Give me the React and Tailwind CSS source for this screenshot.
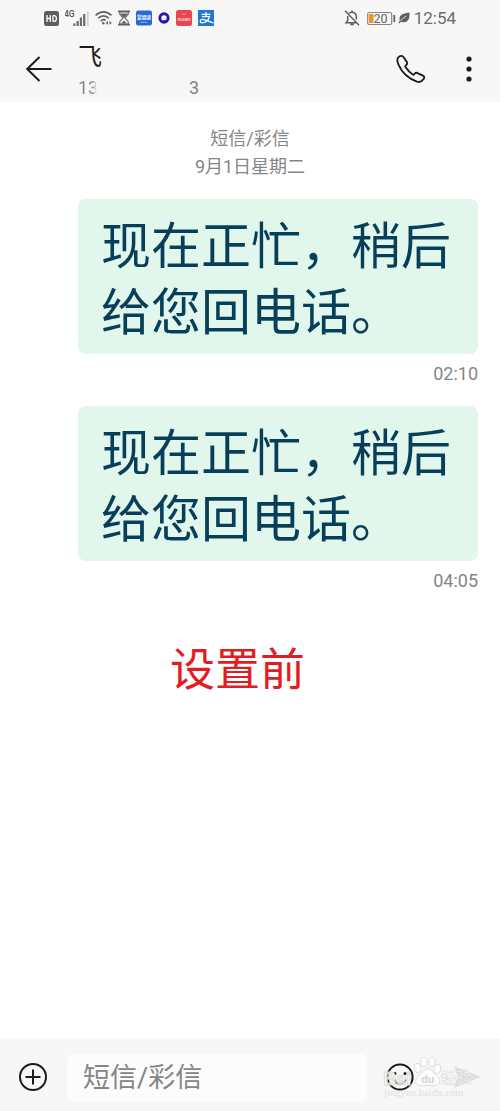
import React from 'react';

const messages = [
    { id: 1, text: '现在正忙，稍后给您回电话。', time: '02:10' },
    { id: 2, text: '现在正忙，稍后给您回电话。', time: '04:05' },
];

const StatusBar = () => {
    return (
        <div className="flex h-9 items-center justify-between px-11 text-[#6b6b6b]">
            <div className="flex items-center gap-[6px]">
                <svg width="15" height="15" viewBox="0 0 15 15" aria-hidden="true">
                    <rect width="15" height="15" rx="2.5" fill="#5d5d5d" />
                    <path d="M3 4v7M6.3 4v7M3 7.5h3.3M9 4.6v5.8M9 4.6h1.2q2.2 0 2.2 2.9t-2.2 2.9H9" fill="none" stroke="#fff" strokeWidth="1.3" />
                </svg>
                <svg width="24" height="17" viewBox="0 0 24 17" aria-hidden="true">
                    <text x="-1" y="7" fontSize="8.5" fontWeight="500" fontFamily="Roboto, sans-serif" fill="#555">4G</text>
                    <path d="M9.3 16v-2.500M12.600 16v-5M15.900 16V7.500M19.200 16V4" stroke="#6b6b6b" strokeWidth="2.2" />
                    <path d="M22.800 16V1.500" stroke="#d2d2d2" strokeWidth="1.800" />
                </svg>
                <svg width="17" height="16" viewBox="0 0 18 16" fill="none" stroke="#5f5f5f" strokeWidth="1.800" aria-hidden="true">
                    <path d="M.6 5.200Q9-2.200 17.400 5.200M3.300 8.200Q9 3.200 14.700 8.200M6 11.200q3-2.600 5.300-.6" />
                    <circle cx="8.800" cy="13.500" r="1.300" fill="#5f5f5f" stroke="none" />
                    <path d="M13.800 11.200v4l-2.400-2zM15.400 11.200l2.400 2-2.400 2z" fill="#5f5f5f" stroke="none" />
                </svg>
                <svg width="12" height="16" viewBox="3 0 12 16" aria-hidden="true">
                    <path d="M3 .5h12v1.800H3zM3 13.700h12v1.800H3z" fill="#5f5f5f" />
                    <path d="M4.800 2v2.300L8 8l-3.200 3.700V14h8.400v-2.300L10 8l3.200-3.700V2z" fill="#fff" stroke="#5f5f5f" strokeWidth="1.100" />
                    <path d="M5 3.500h8L9 8.300zM6 13.500L9 10.500l3 3z" fill="#5f5f5f" />
                </svg>
                <svg width="16" height="16" viewBox="0 0 17 16" aria-hidden="true">
                    <rect width="17" height="16" rx="2.500" fill="#2767d8" />
                    <text x="8.500" y="9" fontSize="5" fontWeight="bold" textAnchor="middle" fontFamily="Noto Sans CJK SC, sans-serif" fill="#fff">掌阅读</text>
                    <path d="M5 12.500h7" stroke="#a9c6ff" strokeWidth="1.200" strokeDasharray="1.500 .5" />
                </svg>
                <svg width="12" height="12" viewBox="0 0 13 13" aria-hidden="true">
                    <circle cx="6.500" cy="6.500" r="4.500" fill="#fff" stroke="#2419a8" strokeWidth="3.200" />
                    <path d="M6.500 8.800l2 2.500" stroke="#2419a8" strokeWidth="2" />
                </svg>
                <svg width="16" height="16" viewBox="0 0 16 16" aria-hidden="true">
                    <rect width="16" height="16" rx="2.500" fill="#ea4650" />
                    <path d="M5.500 3q2.500 3.500 5 0" fill="none" stroke="#ffa5a8" strokeWidth=".8" />
                    <text x="8" y="11" fontSize="3.500" fontWeight="bold" textAnchor="middle" fontFamily="Roboto, sans-serif" fill="#ffd7d8">HUAWEI</text>
                </svg>
                <svg width="16" height="16" viewBox="0 0 16 16" aria-hidden="true">
                    <rect width="16" height="16" fill="#1c77e0" />
                    <path d="M3.500 4.300h9M8 2v4.500M4 6.700h7.500Q10 12.500 4.200 12.800c-2.800 0-2.500-3.600.6-3.400 3.200.2 5.200 2 10.700 3.600" fill="none" stroke="#fff" strokeWidth="1.300" />
                </svg>
            </div>
            <div className="flex items-center gap-1">
                <svg className="mr-[3px]" width="16" height="16" viewBox="0 0 16 16" fill="none" stroke="#5f5f5f" strokeWidth="1.500" aria-hidden="true">
                    <path d="M5 3.200Q6 2.300 8 2.300q4 0 4.300 4.200v3M3.700 6v4.500L2 12.800h10.500M8 .6v1.700M1 .8l14 14.400" />
                    <path d="M6.200 14.300h3.600" strokeWidth="2" />
                </svg>
                <svg width="29" height="15" viewBox="0 0 29 15" aria-hidden="true">
                    <rect x=".7" y="1.500" width="24" height="12" rx="1.500" fill="none" stroke="#858585" strokeWidth="1.200" />
                    <path d="M2 3h4.500v9H2z" fill="#f7931d" />
                    <text x="6.500" y="12" fontSize="12.500" fontFamily="Roboto, sans-serif" fill="#666">20</text>
                    <path d="M27.300 4v7" stroke="#666" strokeWidth="1.800" />
                </svg>
                <svg className="-ml-[2px]" width="12" height="12" viewBox="0 0 12 12" aria-hidden="true">
                    <path d="M11.500.5Q12 10 6 10.200q-1.800.2-3-.5L1.200 11.500l-.7-.8 1.300-1.900Q-.5 1.500 11.500.5z" fill="#5f5f5f" />
                    <path d="M2.500 9Q4 6 8.500 4" fill="none" stroke="#f7f7f7" strokeWidth=".8" />
                </svg>
                <span className="text-[17px] leading-6">12:54</span>
            </div>
        </div>
    );
};

const ChatHeader = () => {
    return (
        <div className="flex h-[66px] items-center pr-4 pl-6">
            <button type="button" aria-label="返回" className="flex w-[54px] items-center">
                <svg width="29" height="28" viewBox="0 0 29 28" fill="none" stroke="#1c1c1c" strokeWidth="2" aria-hidden="true">
                    <path d="M27.500 14H3.200M15.500 2L3.200 14l12.300 12" />
                </svg>
            </button>
            <div className="flex-1 self-end">
                <h1 className="text-2xl leading-[34px] text-[#1c1c1c]">飞</h1>
                <p className="flex w-[121px] justify-between text-[18px] leading-7 text-[#858585]">
                    <span className="bg-linear-to-r from-[#858585] from-70% to-[#f7f7f7] to-95% bg-clip-text text-transparent">13</span>
                    <span>3</span>
                </p>
            </div>
            <button type="button" aria-label="拨打电话" className="mr-7">
                <svg width="30" height="30" viewBox="79 58 90 90" fill="none" stroke="#1c1c1c" strokeWidth="5.500" strokeLinejoin="round" aria-hidden="true">
                    <path d="M88 66Q97 60 103 69L112 83Q114 87 110 91Q105 94 108 98Q117 112 130 120Q133 121 135 117Q140 112 145 116L160 123Q167 127 161 134Q154 145 142 141Q102 126 86 89Q79 72 88 66z" />
                </svg>
            </button>
            <button type="button" aria-label="更多" className="flex w-[30px] justify-center">
                <svg width="8" height="28" viewBox="0 0 8 28" fill="#1c1c1c" aria-hidden="true">
                    <circle cx="4" cy="4" r="2.600" />
                    <circle cx="4" cy="14" r="2.600" />
                    <circle cx="4" cy="24" r="2.600" />
                </svg>
            </button>
        </div>
    );
};

const Message = ({ text, time }) => {
    return (
        <li className="flex flex-col">
            <p className="rounded-lg bg-[#e1f7eb] pt-[15px] pr-5 pb-2 pl-[23px] text-[50px] leading-[66px] text-[#073f5b]">
                {text}
            </p>
            <time className="self-end pt-1 text-[18px] leading-8 text-[#858585]">{time}</time>
        </li>
    );
};

const Watermark = () => {
    return (
        <svg className="pointer-events-none absolute right-[19px] bottom-[11px]" width="100" height="45" viewBox="393 75 300 135" aria-hidden="true">
            <g fill="#fcfcfc" stroke="#d8d8d8" strokeWidth="2.500">
                <g fontWeight="bold" fillOpacity=".75">
                    <text x="400" y="164" fontSize="54" fontFamily="Liberation Sans, sans-serif">Bai</text>
                    <text x="572" y="160" fontSize="46" fontFamily="Noto Sans CJK SC, sans-serif" strokeWidth="1.500">经验</text>
                </g>
                <ellipse cx="503" cy="114" rx="10" ry="14" transform="rotate(-15 503 114)" />
                <ellipse cx="521" cy="96" rx="10" ry="14" />
                <ellipse cx="546" cy="96" rx="10" ry="14" />
                <ellipse cx="562" cy="117" rx="10" ry="14" transform="rotate(15 562 117)" />
                <path d="M533 116q10 0 17 11l15 16q9 13-1 21-8 5-31 2-23 3-31-2-10-8-1-21l15-16q7-11 17-11z" />
                <text x="514" y="160" fontSize="32" fontWeight="bold" fontFamily="Liberation Sans, sans-serif" fill="#d2d2d2" stroke="none">du</text>
            </g>
            <text x="402" y="198" fontSize="32" fontFamily="Liberation Serif, serif" fill="#e0e0e0">jingyan.baidu.com</text>
        </svg>
    );
};

const Composer = () => {
    return (
        <footer className="relative flex h-[72px] items-center bg-[#f7f7f7] pt-1 pr-4 pl-[18px]">
            <button type="button" aria-label="添加" className="mr-[19px]">
                <svg width="30" height="30" viewBox="0 0 30 30" fill="none" stroke="#1c1c1c" strokeWidth="2" aria-hidden="true">
                    <circle cx="15" cy="15" r="13" />
                    <path d="M15 7.500v15M7.500 15h15" />
                </svg>
            </button>
            <input
                type="text"
                aria-label="短信/彩信"
                placeholder="短信/彩信"
                className="h-[49px] min-w-0 flex-1 rounded-lg bg-[#fcfcfc] px-4 pt-[2px] text-[27px] text-[#1c1c1c] outline-none placeholder:text-[#858585]"
            />
            <button type="button" aria-label="表情" className="ml-[18px]">
                <svg width="30" height="30" viewBox="0 0 30 30" fill="none" stroke="#1c1c1c" strokeWidth="2" aria-hidden="true">
                    <circle cx="15" cy="15" r="12.600" />
                    <path d="M9.500 17.500q1.500 4.500 5.500 4.500t5.500-4.500" />
                    <circle cx="10" cy="11.500" r="1.500" fill="#1c1c1c" stroke="none" />
                    <circle cx="20" cy="11.500" r="1.500" fill="#1c1c1c" stroke="none" />
                </svg>
            </button>
            <button type="button" aria-label="发送" className="ml-9">
                <svg width="33" height="28" viewBox="0 0 33 28" fill="#dfdfdf" aria-hidden="true">
                    <path d="M3 3l27 11L3 25l4-11z" />
                </svg>
            </button>
            <Watermark />
        </footer>
    );
};

const App = () => {
    return (
        <div className="flex min-h-screen flex-col bg-white font-['Roboto','Noto_Sans_CJK_SC',sans-serif]">
            <header className="bg-[#f7f7f7]">
                <StatusBar />
                <ChatHeader />
            </header>
            <main className="flex-1 pt-[23px] pr-[22px] pl-[78px]">
                <div className="-ml-14 text-center text-[18px] leading-7 text-[#858585]">
                    <p>短信/彩信</p>
                    <p>9月1日星期二</p>
                </div>
                <ul className="flex flex-col gap-4 pt-[18px]">
                    {messages.map((message) => (
                        <Message key={message.id} text={message.text} time={message.time} />
                    ))}
                </ul>
                <p className="pt-[42px] pl-[92px] text-[45px] leading-[64px] text-[#e31c24]">设置前</p>
            </main>
            <Composer />
        </div>
    );
};

export default App;
